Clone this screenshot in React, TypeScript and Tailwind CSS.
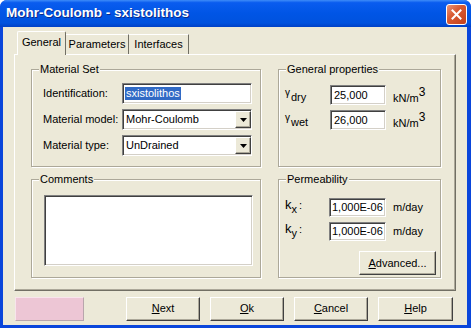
import React from 'react';

const sunken =
  'bg-white border border-t-[#808080] border-l-[#808080] border-r-white border-b-white shadow-[inset_1px_1px_0_#404040,inset_-1px_-1px_0_#D4D0C8]';
const raised =
  'bg-[#ECE9D8] border border-t-white border-l-white border-r-[#404040] border-b-[#404040] shadow-[inset_-1px_-1px_0_#ACA899]';
const group =
  'relative border border-[#ACA899] shadow-[inset_1px_1px_0_#fff,1px_1px_0_#fff]';

function Legend({ children }: { children: React.ReactNode }) {
  return (
    <span className="absolute -top-[8px] left-[7px] bg-[#ECE9D8] px-[1px] leading-[14px]">{children}</span>
  );
}

function Select({ value }: { value: string }) {
  return (
    <div className={`${sunken} h-[21px] flex items-center`}>
      <span className="flex-1 pl-[3px] leading-none">{value}</span>
      <div className={`${raised} w-[16px] h-[17px] flex items-center justify-center`}>
        <svg width="7" height="4" viewBox="0 0 7 4">
          <path d="M0 0h7L3.5 4z" fill="#000" />
        </svg>
      </div>
    </div>
  );
}

function Btn({ children, className = '' }: { children: React.ReactNode; className?: string }) {
  return (
    <div className={`${raised} h-[24px] flex items-center justify-center ${className}`}>{children}</div>
  );
}

export default function App() {
  return (
    <div className="w-[471px] h-[328px] flex flex-col bg-[#0A46DB] rounded-t-[7px] overflow-hidden font-['Liberation_Sans',Arial,sans-serif] text-[11px] text-black">
      {/* title bar */}
      <div className="h-[27px] flex items-center pl-[6px] pr-[4px] bg-[linear-gradient(180deg,#3E8CF8_0%,#0A5CEF_10%,#0055E5_50%,#0052DE_85%,#0041C6_100%)]">
        <span className="flex-1 text-white font-bold text-[13.5px] [text-shadow:1px_1px_0_#0B2A8A]">
          Mohr-Coulomb - sxistolithos
        </span>
        <div className="w-[21px] h-[21px] mt-[1px] rounded-[3px] border border-white bg-[linear-gradient(135deg,#E9967A_0%,#D95B33_40%,#C2411B_100%)] flex items-center justify-center">
          <svg width="11" height="11" viewBox="0 0 11 11">
            <path d="M1.5 1.5l8 8M9.5 1.5l-8 8" stroke="#fff" strokeWidth="2" strokeLinecap="square" />
          </svg>
        </div>
      </div>

      {/* body */}
      <div className="flex-1 ml-[3px] mr-[4px] mb-[3px] bg-[#ECE9D8] flex flex-col">
        {/* tabs */}
        <div className="flex items-end pl-[14px] pt-[4px] h-[27px]">
          <div className="relative z-10 w-[49px] h-[24px] -mb-[1px] bg-[#ECE9D8] border-l border-t border-white border-r border-r-[#716F64] rounded-t-[2px] flex items-center justify-center pb-[2px]">
            General
          </div>
          <div className="w-[63px] h-[20px] border-t border-white border-r border-r-[#716F64] flex items-center justify-center">
            Parameters
          </div>
          <div className="w-[60px] h-[20px] border-t border-white border-r border-r-[#716F64] flex items-center justify-center">
            Interfaces
          </div>
        </div>

        {/* tab panel */}
        <div className="mx-[11px] h-[237px] border border-l-white border-t-white border-r-[#716F64] border-b-[#716F64] shadow-[inset_-1px_-1px_0_#ACA899] grid grid-cols-[230px_163px] grid-rows-[98px_99px] gap-x-[17px] gap-y-[12px] pl-[16px] pt-[14px]">
          {/* Material Set */}
          <div className={group}>
            <Legend>Material Set</Legend>
            <div className="grid grid-cols-[79px_130px] gap-y-[5px] pl-[11px] pt-[13px] items-center">
              <span>Identification:</span>
              <div className={`${sunken} h-[21px] flex items-center pl-[2px]`}>
                <span className="bg-[#316AC5] text-white px-[1px] leading-[13px]">sxistolithos</span>
              </div>
              <span>Material model:</span>
              <Select value="Mohr-Coulomb" />
              <span>Material type:</span>
              <Select value="UnDrained" />
            </div>
          </div>

          {/* General properties */}
          <div className={group}>
            <Legend>General properties</Legend>
            <div className="flex flex-col gap-[5px] pl-[6px] pt-[15px]">
              {[
                ['dry', '25,000'],
                ['wet', '26,000'],
              ].map(([sub, val]) => (
                <div key={sub} className="flex items-center h-[20px]">
                  <span className="w-[45px] relative">
                    <span className="relative -top-[3px] text-[10px]">γ</span>
                    <span className="relative top-[2px] ml-[1px]">{sub}</span>
                  </span>
                  <div className={`${sunken} w-[56px] h-[20px] flex items-center pl-[3px]`}>{val}</div>
                  <span className="ml-[7px]">
                    <span className="relative top-[3px]">kN/m</span>
                    <span className="relative -top-[3px] text-[12px]">3</span>
                  </span>
                </div>
              ))}
            </div>
          </div>

          {/* Comments */}
          <div className={group}>
            <Legend>Comments</Legend>
            <div className="pl-[12px] pt-[15px]">
              <div className={`${sunken} w-[209px] h-[71px]`} />
            </div>
          </div>

          {/* Permeability */}
          <div className={group}>
            <Legend>Permeability</Legend>
            <div className="flex flex-col gap-[4px] pl-[6px] pt-[17px]">
              {['x', 'y'].map((s) => (
                <div key={s} className="flex items-center h-[20px]">
                  <span className="w-[44px] relative -top-[2px]">
                    <span className="text-[13px]">k</span>
                    <span className="relative top-[4px]">{s}</span>
                    <span className="ml-[2px]">:</span>
                  </span>
                  <div className={`${sunken} w-[57px] h-[19px] flex items-center pl-[2px]`}>1,000E-06</div>
                  <span className="ml-[7px]">m/day</span>
                </div>
              ))}
              <div className="flex justify-end pr-[4px] mt-[6px]">
                <Btn className="w-[77px] h-[20px]">
                  <span>
                    <u>A</u>dvanced...
                  </span>
                </Btn>
              </div>
            </div>
          </div>
        </div>

        {/* bottom buttons */}
        <div className="flex-1 flex items-center pl-[12px] pr-[14px] pt-[1px]">
          <div className="w-[69px] h-[24px] bg-[#EDC6D5] border border-t-[#F8E4EC] border-l-[#F8E4EC] border-r-[#B8A6AC] border-b-[#B8A6AC]" />
          <div className="ml-auto flex gap-[10px]">
            <Btn className="w-[74px]">
              <span>
                <u>N</u>ext
              </span>
            </Btn>
            <Btn className="w-[74px]">
              <span>
                <u>O</u>k
              </span>
            </Btn>
            <Btn className="w-[74px]">
              <span>
                <u>C</u>ancel
              </span>
            </Btn>
            <Btn className="w-[75px]">
              <span>
                <u>H</u>elp
              </span>
            </Btn>
          </div>
        </div>
      </div>
    </div>
  );
}
